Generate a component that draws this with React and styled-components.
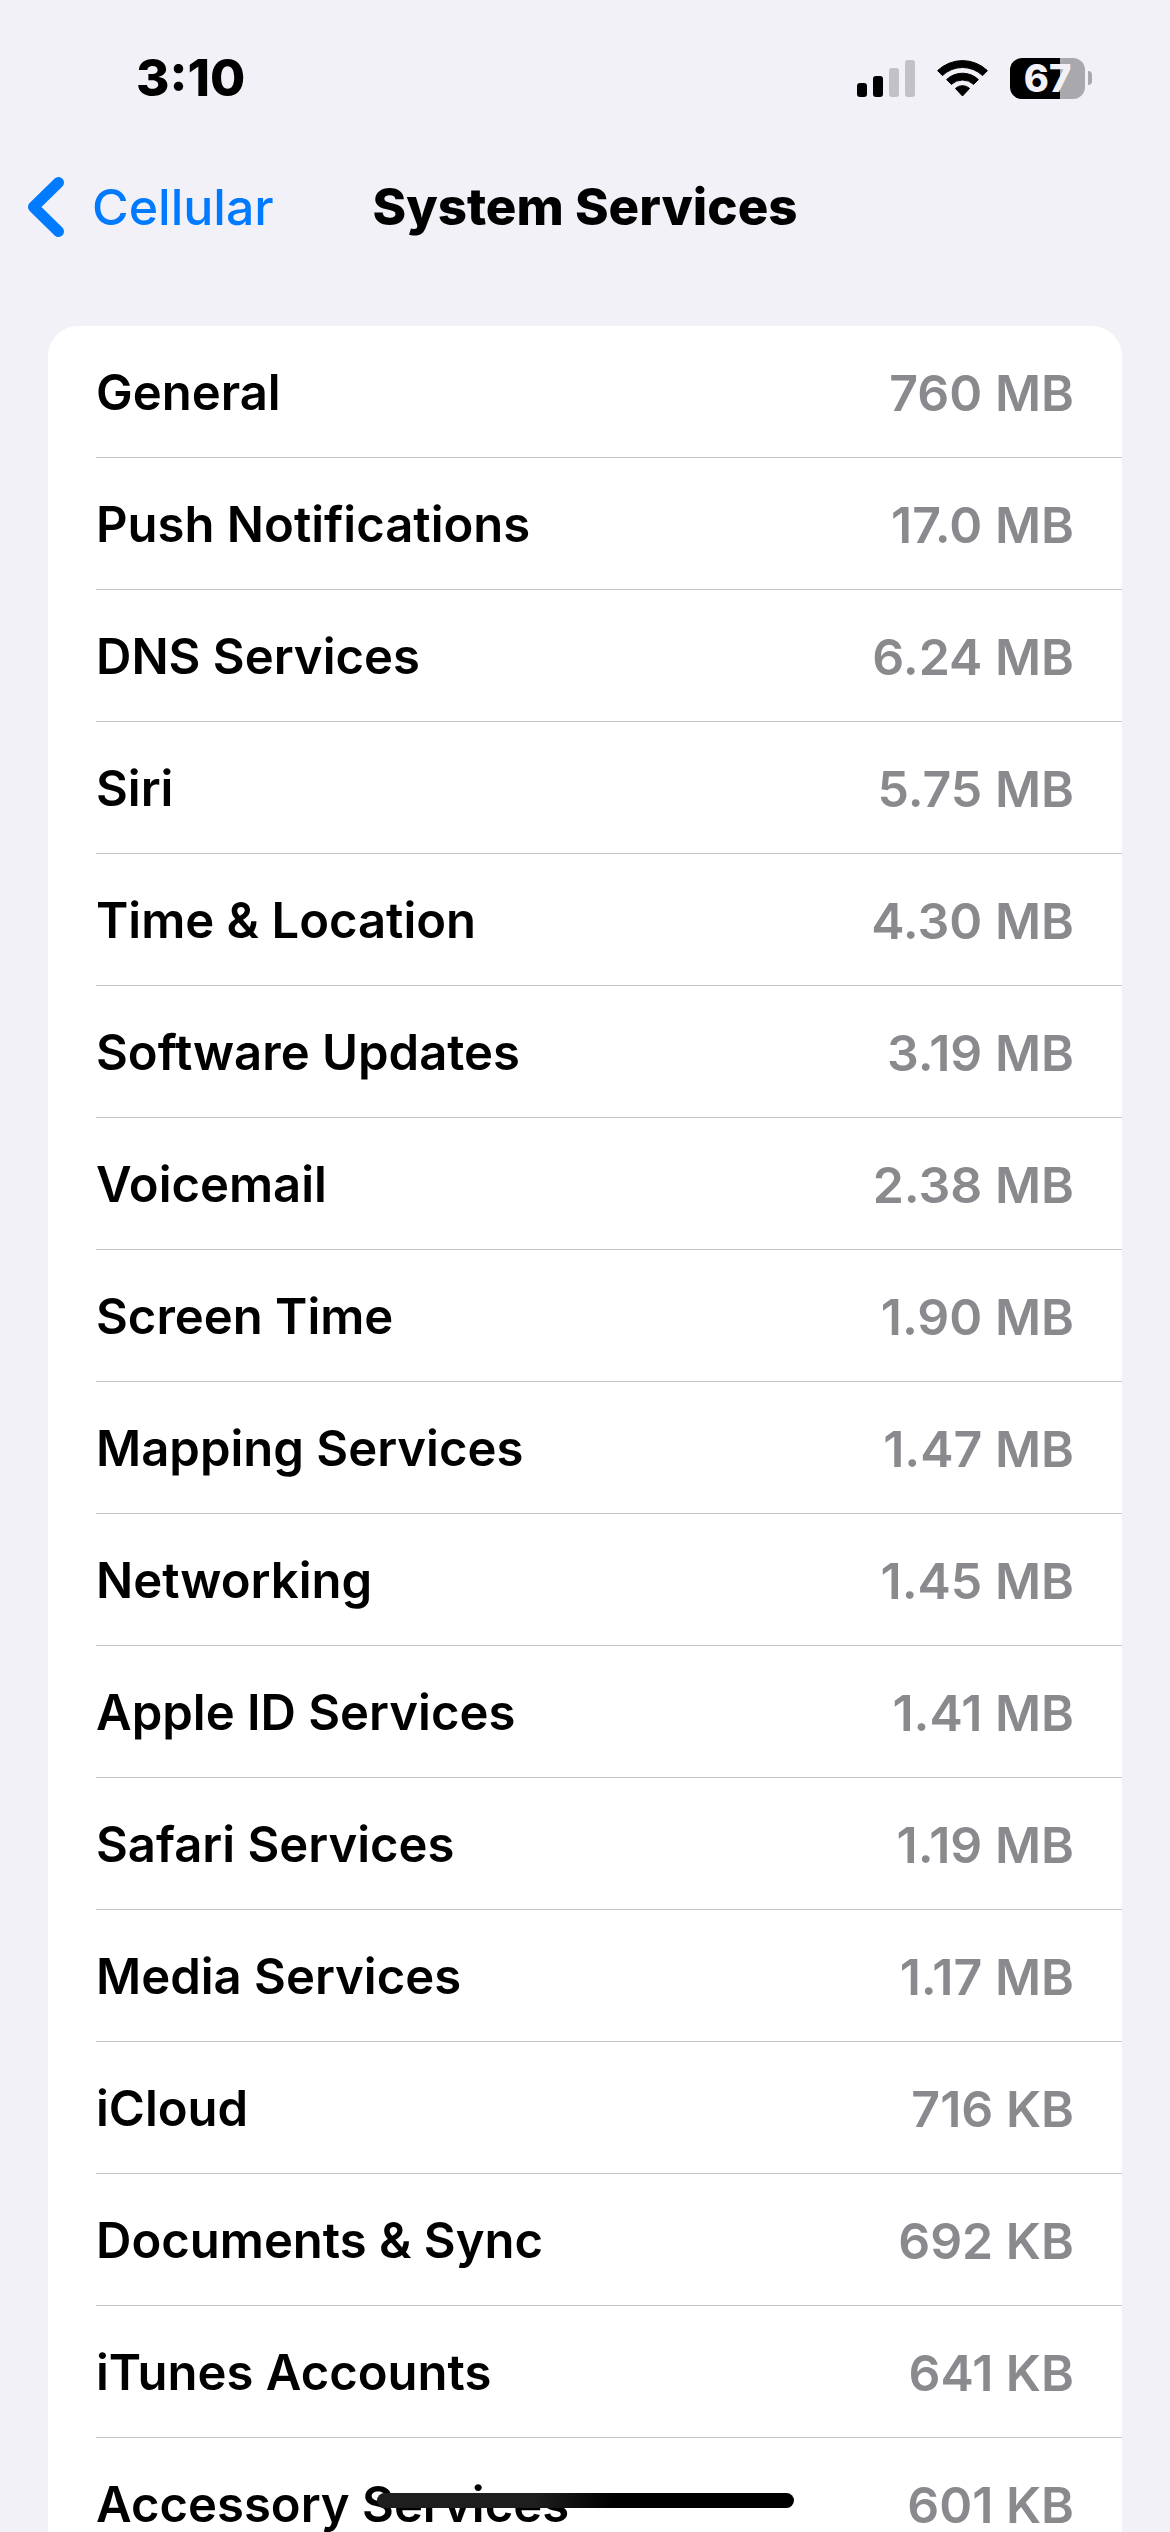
import React from "react";
import styled, { createGlobalStyle } from "styled-components";

const GlobalStyle = createGlobalStyle`
  *, *::before, *::after { box-sizing: border-box; }
  body {
    margin: 0;
    background: #f2f1f7;
    color: #000;
    font-family: Inter, "Liberation Sans", sans-serif;
    font-size: 50px;
    line-height: 60px;
  }
`;

const Screen = styled.div`
  height: 100vh;
  display: flex;
  flex-direction: column;
  overflow: hidden;
`;

const StatusBar = styled.div`
  display: flex;
  align-items: center;
  justify-content: space-between;
  padding: 48px 78px 33px 136px;
`;

const Clock = styled.time`
  font-size: 51px;
  font-weight: 800;
`;

const Indicators = styled.div`
  display: flex;
  align-items: center;
  gap: 22px;
`;

const Battery = styled.div`
  display: flex;
  align-items: center;
  gap: 3px;
`;

const BatteryBody = styled.div`
  width: 75px;
  height: 41px;
  border-radius: 12px;
  background: linear-gradient(
    to right,
    #000 ${(p) => p.$level}%,
    #a9a8ad ${(p) => p.$level}%
  );
  color: #f2f1f7;
  font-size: 38px;
  font-weight: 800;
  line-height: 41px;
  text-align: center;
`;

const BatteryTip = styled.div`
  width: 4px;
  height: 14px;
  border-radius: 0 4px 4px 0;
  background: #a9a8ad;
`;

const NavBar = styled.header`
  display: grid;
  grid-template-columns: 1fr auto 1fr;
  align-items: center;
  height: 132px;
  padding: 0 27px;
`;

const BackLink = styled.a`
  display: flex;
  align-items: center;
  gap: 27px;
  color: #007aff;
  font-weight: 500;
  text-decoration: none;
`;

const Title = styled.h1`
  margin: 0;
  font-size: 51px;
  font-weight: 800;
`;

const Content = styled.main`
  flex: 1;
  min-height: 0;
  overflow-y: auto;
  scrollbar-width: none;
  padding: 53px 48px 0;
`;

const Card = styled.ul`
  margin: 0;
  padding: 0 0 0 48px;
  list-style: none;
  background: #fff;
  border-radius: 30px;
`;

const Row = styled.li`
  display: flex;
  align-items: center;
  justify-content: space-between;
  height: 132px;
  padding: 2px 48px 0 0;
  font-weight: 600;
  border-bottom: 1px solid #c6c6c8;
`;

const Name = styled.span`
  font-size: 49px;
`;

const Usage = styled.span`
  color: #8a898e;
`;

const HomeIndicator = styled.div`
  position: fixed;
  bottom: 24px;
  left: 50%;
  width: 417px;
  height: 15px;
  margin-left: -208px;
  border-radius: 8px;
  background: linear-gradient(to right, #1e1e1e 38%, #000 57%);
`;

const services = [
  ["General", "760 MB"],
  ["Push Notifications", "17.0 MB"],
  ["DNS Services", "6.24 MB"],
  ["Siri", "5.75 MB"],
  ["Time & Location", "4.30 MB"],
  ["Software Updates", "3.19 MB"],
  ["Voicemail", "2.38 MB"],
  ["Screen Time", "1.90 MB"],
  ["Mapping Services", "1.47 MB"],
  ["Networking", "1.45 MB"],
  ["Apple ID Services", "1.41 MB"],
  ["Safari Services", "1.19 MB"],
  ["Media Services", "1.17 MB"],
  ["iCloud", "716 KB"],
  ["Documents & Sync", "692 KB"],
  ["iTunes Accounts", "641 KB"],
  ["Accessory Services", "601 KB"],
];

function SignalIcon() {
  return (
    <svg width="58" height="38" viewBox="0 0 58 38" aria-hidden="true">
      <rect x="0" y="24" width="10" height="14" rx="3" fill="#000" />
      <rect x="16" y="17" width="10" height="21" rx="3" fill="#000" />
      <rect x="32" y="9" width="10" height="29" rx="3" fill="#c2c1c6" />
      <rect x="48" y="1" width="10" height="37" rx="3" fill="#c2c1c6" />
    </svg>
  );
}

function WifiIcon() {
  return (
    <svg width="51" height="38" viewBox="0 0 51 38" aria-hidden="true">
      <path d="M0.6 11.6 A36 36 0 0 1 50.4 11.6 L45.6 16.6 A29 29 0 0 0 5.4 16.6 Z" stroke="#000" strokeWidth="1" strokeLinejoin="round" />
      <path d="M9.6 20.6 A23 23 0 0 1 41.4 20.6 L36.6 25.4 A16.2 16.2 0 0 0 14.4 25.4 Z" stroke="#000" strokeWidth="1" strokeLinejoin="round" />
      <path d="M18.4 29.4 A10.5 10.5 0 0 1 32.6 29.4 L25.5 37 Z" stroke="#000" strokeWidth="1" strokeLinejoin="round" />
    </svg>
  );
}

function BackIcon() {
  return (
    <svg width="38" height="60" viewBox="0 0 38 60" aria-hidden="true">
      <path d="M31.5 5.5 L6.5 30 L31.5 54.5" fill="none" stroke="#007aff" strokeWidth="11" strokeLinecap="round" strokeLinejoin="round" />
    </svg>
  );
}

export default function App() {
  return (
    <>
      <GlobalStyle />
      <Screen>
        <StatusBar>
          <Clock>3:10</Clock>
          <Indicators>
            <SignalIcon />
            <WifiIcon />
            <Battery>
              <BatteryBody $level={67}>67</BatteryBody>
              <BatteryTip />
            </Battery>
          </Indicators>
        </StatusBar>
        <NavBar>
          <BackLink href="#cellular">
            <BackIcon />
            Cellular
          </BackLink>
          <Title>System Services</Title>
        </NavBar>
        <Content>
          <Card>
            {services.map(([name, usage]) => (
              <Row key={name}>
                <Name>{name}</Name>
                <Usage>{usage}</Usage>
              </Row>
            ))}
          </Card>
        </Content>
      </Screen>
      <HomeIndicator />
    </>
  );
}
